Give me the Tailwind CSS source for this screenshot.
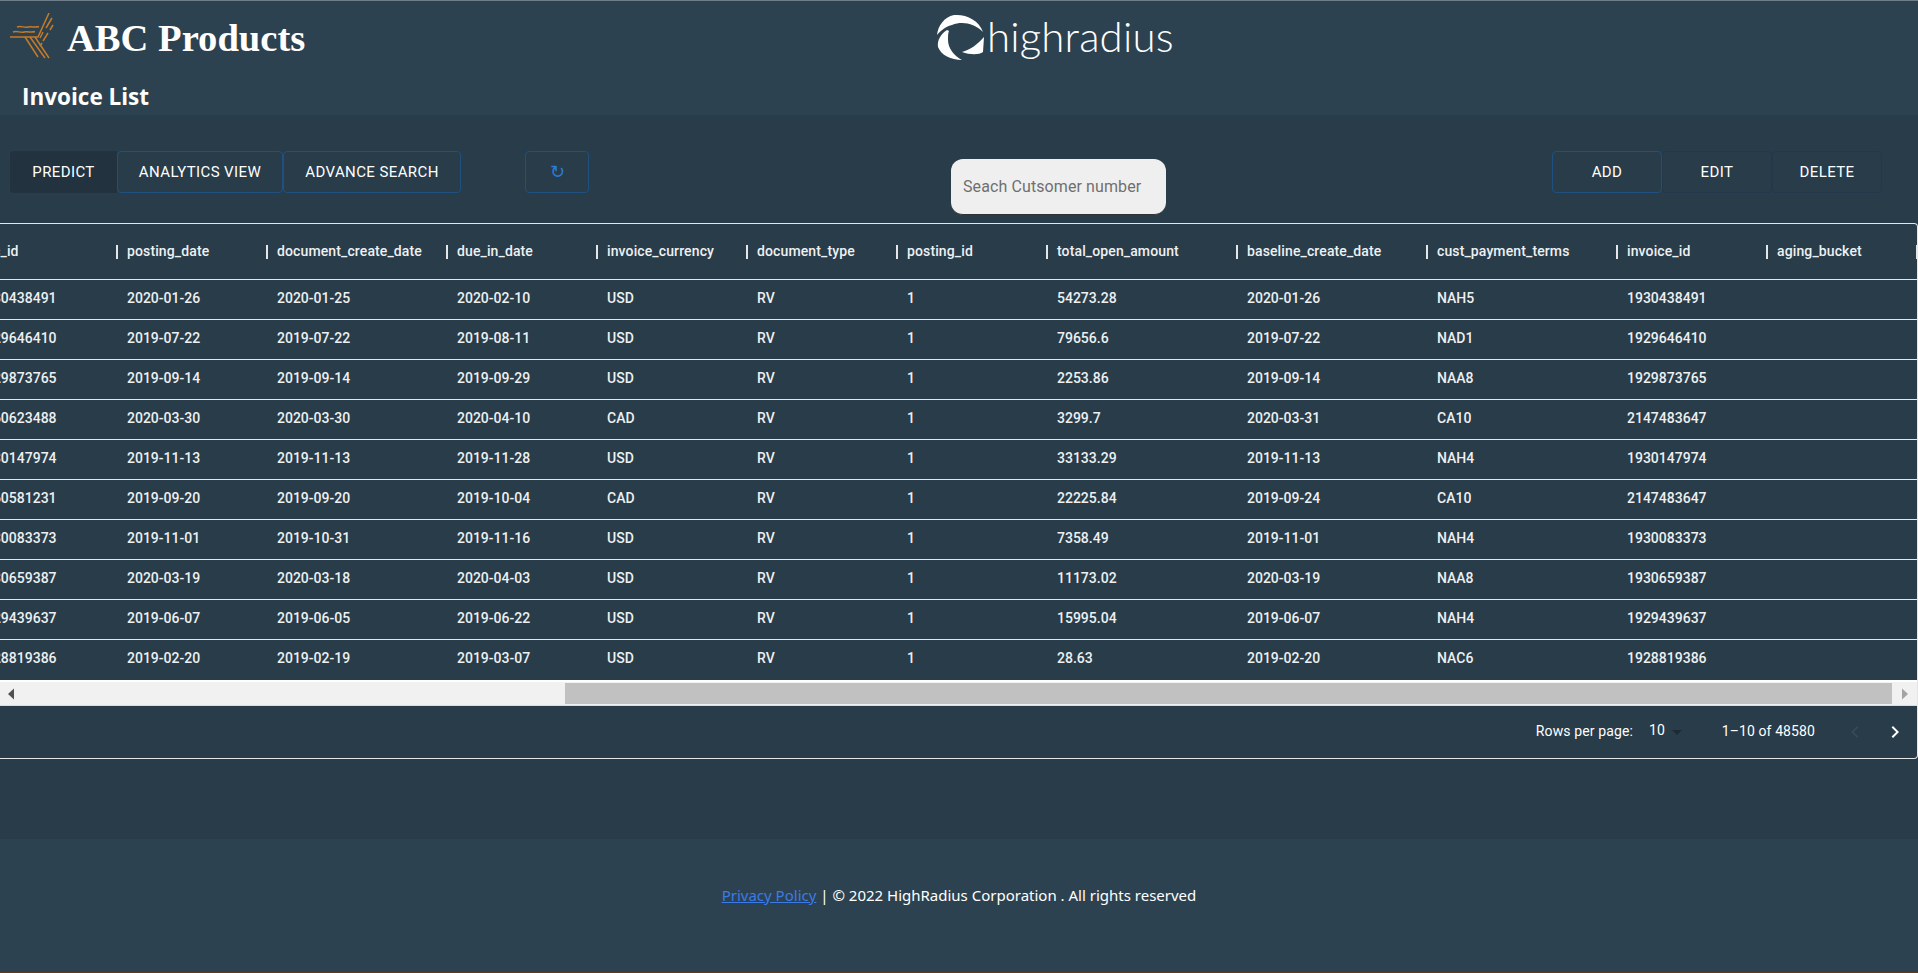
<!DOCTYPE html>
<html lang="en">
<head>
<meta charset="utf-8">
<title>ABC Products - Invoice List</title>
<script src="https://cdn.jsdelivr.net/npm/@tailwindcss/browser@4"></script>
</head>
<body class="m-0 w-[1918px] h-[973px] overflow-hidden bg-[#283c4a] font-['Roboto',sans-serif] text-white">
<header class="h-[115px] bg-[#2d4250] border-t border-t-[#6f7f8a] flex flex-col">
  <div class="h-[75px] flex items-start">
    <div class="w-[934px] shrink-0 flex items-start pl-[10px] pt-[12px]">
      <svg class="w-[45px] h-[47px]" viewBox="10 13 45 47" fill="none" stroke="#c77a26" stroke-width="1.5">
        <path d="M10 37H38L49 13"/><path d="M17 27c4-1.500 7 1 11 0s7 1 11-.5"/><path d="M13 32c4-1.500 7 1 11 0s7 1 11-.5"/>
        <path d="M25 37l13 20M30 37l15 21M35 37l14 21"/><path d="M52 18l-6 10M43 32l-3 6M53 25l-3 5M48 33l-5 8M42 43l-2 3"/>
      </svg>
      <span class="ml-[12px] font-['Liberation_Serif',serif] font-bold text-[38.600px] leading-[50px]">ABC Products</span>
    </div>
    <div class="flex items-start pt-[9px]">
      <svg class="w-[56px] h-[56px] shrink-0" viewBox="0 0 56 56" fill="#fff">
        <path d="M49 22C45 10 32 4 20 5 10 7 4 16 3 25c4-5 10-9 15-10 10-4 22-2 31 7Z"/>
        <path d="M13 20C7 24 3 30 4 37c3 8 13 13 24 13-8-4-14-12-14-20 0-4 0-7 1-9Z"/>
        <path d="M50 27l-1 15c-4 3-13 3-21 0 8-2 16-8 22-15Z"/>
      </svg>
      <span class="mt-[1px] ml-[-3px] font-['Lato',sans-serif] font-light text-[42px] leading-[50px] tracking-[0.15px]">highradius</span>
    </div>
  </div>
  <h1 class="pl-[22px] font-['Open_Sans',sans-serif] font-bold text-[22.500px] leading-[32px] mt-[5px]">Invoice List</h1>
</header>

<section class="h-[108px] flex items-start pt-[36px] pl-[10px]">
  <div class="flex shrink-0">
    <button class="h-[42px] w-[107px] rounded-l-[4px] bg-[#22323e] text-[15px] tracking-[0.4px]">PREDICT</button>
    <button class="h-[42px] w-[166px] rounded-[4px] border border-[#1f5080] text-[15px] tracking-[0.4px]">ANALYTICS VIEW</button>
    <button class="h-[42px] w-[178px] rounded-[4px] border border-[#1f5080] text-[15px] tracking-[0.4px]">ADVANCE SEARCH</button>
  </div>
  <button class="ml-[64px] shrink-0 h-[42px] w-[64px] rounded-[4px] border border-[#1f5080] text-[18px] pb-[2px] text-[#2b7ad6]">↻</button>
  <div class="ml-[362px] mt-[8px] shrink-0 w-[215px] h-[56px] rounded-[12px] bg-[#efefef] border-b border-b-[#333] flex items-center px-[12px] pt-[1px] text-[16px] tracking-[0.1px] text-[#6f6f6f]">Seach Cutsomer number</div>
  <div class="ml-[386px] flex shrink-0">
    <button class="h-[42px] w-[110px] rounded-[4px] border border-[#1f5080] text-[15px] tracking-[0.4px]">ADD</button>
    <button class="h-[42px] w-[110px] rounded-[4px] border border-[#23384a] text-[15px] tracking-[0.4px]">EDIT</button>
    <button class="h-[42px] w-[110px] rounded-[4px] border border-[#23384a] text-[15px] tracking-[0.4px]">DELETE</button>
  </div>
</section>

<main class="h-[536px] border-y border-r border-[#e4e6e8] rounded-r-[4px] overflow-hidden">
  <div class="ml-[-44px] text-[14px] font-medium text-[#eef0f1]">
    <div class="flex h-[56px] items-center border-b border-[#e4e6e8] tracking-[0.12px]">
      <div class="w-[160px] pl-[21px] shrink-0">doc_id</div>
      <div class="w-[150px] shrink-0 flex items-center"><span class="w-[2px] h-[14px] bg-[#e4e6e8] mr-[9px]"></span>posting_date</div>
      <div class="w-[180px] shrink-0 flex items-center"><span class="w-[2px] h-[14px] bg-[#e4e6e8] mr-[9px]"></span>document_create_date</div>
      <div class="w-[150px] shrink-0 flex items-center"><span class="w-[2px] h-[14px] bg-[#e4e6e8] mr-[9px]"></span>due_in_date</div>
      <div class="w-[150px] shrink-0 flex items-center"><span class="w-[2px] h-[14px] bg-[#e4e6e8] mr-[9px]"></span>invoice_currency</div>
      <div class="w-[150px] shrink-0 flex items-center"><span class="w-[2px] h-[14px] bg-[#e4e6e8] mr-[9px]"></span>document_type</div>
      <div class="w-[150px] shrink-0 flex items-center"><span class="w-[2px] h-[14px] bg-[#e4e6e8] mr-[9px]"></span>posting_id</div>
      <div class="w-[190px] shrink-0 flex items-center"><span class="w-[2px] h-[14px] bg-[#e4e6e8] mr-[9px]"></span>total_open_amount</div>
      <div class="w-[190px] shrink-0 flex items-center"><span class="w-[2px] h-[14px] bg-[#e4e6e8] mr-[9px]"></span>baseline_create_date</div>
      <div class="w-[190px] shrink-0 flex items-center"><span class="w-[2px] h-[14px] bg-[#e4e6e8] mr-[9px]"></span>cust_payment_terms</div>
      <div class="w-[150px] shrink-0 flex items-center"><span class="w-[2px] h-[14px] bg-[#e4e6e8] mr-[9px]"></span>invoice_id</div>
      <div class="w-[150px] shrink-0 flex items-center"><span class="w-[2px] h-[14px] bg-[#e4e6e8] mr-[9px]"></span>aging_bucket</div>
      <div class="w-[2px] h-[14px] bg-[#e4e6e8] shrink-0"></div>
    </div>
    <div class="flex h-[40px] items-center border-b border-[#e4e6e8] pb-[2px]"><div class="w-[171px] pl-[21px] shrink-0">1930438491</div><div class="w-[150px] shrink-0">2020-01-26</div><div class="w-[180px] shrink-0">2020-01-25</div><div class="w-[150px] shrink-0">2020-02-10</div><div class="w-[150px] shrink-0">USD</div><div class="w-[150px] shrink-0">RV</div><div class="w-[150px] shrink-0">1</div><div class="w-[190px] shrink-0">54273.28</div><div class="w-[190px] shrink-0">2020-01-26</div><div class="w-[190px] shrink-0">NAH5</div><div class="w-[150px] shrink-0">1930438491</div></div>
    <div class="flex h-[40px] items-center border-b border-[#e4e6e8] pb-[2px]"><div class="w-[171px] pl-[21px] shrink-0">1929646410</div><div class="w-[150px] shrink-0">2019-07-22</div><div class="w-[180px] shrink-0">2019-07-22</div><div class="w-[150px] shrink-0">2019-08-11</div><div class="w-[150px] shrink-0">USD</div><div class="w-[150px] shrink-0">RV</div><div class="w-[150px] shrink-0">1</div><div class="w-[190px] shrink-0">79656.6</div><div class="w-[190px] shrink-0">2019-07-22</div><div class="w-[190px] shrink-0">NAD1</div><div class="w-[150px] shrink-0">1929646410</div></div>
    <div class="flex h-[40px] items-center border-b border-[#e4e6e8] pb-[2px]"><div class="w-[171px] pl-[21px] shrink-0">1929873765</div><div class="w-[150px] shrink-0">2019-09-14</div><div class="w-[180px] shrink-0">2019-09-14</div><div class="w-[150px] shrink-0">2019-09-29</div><div class="w-[150px] shrink-0">USD</div><div class="w-[150px] shrink-0">RV</div><div class="w-[150px] shrink-0">1</div><div class="w-[190px] shrink-0">2253.86</div><div class="w-[190px] shrink-0">2019-09-14</div><div class="w-[190px] shrink-0">NAA8</div><div class="w-[150px] shrink-0">1929873765</div></div>
    <div class="flex h-[40px] items-center border-b border-[#e4e6e8] pb-[2px]"><div class="w-[171px] pl-[21px] shrink-0">2960623488</div><div class="w-[150px] shrink-0">2020-03-30</div><div class="w-[180px] shrink-0">2020-03-30</div><div class="w-[150px] shrink-0">2020-04-10</div><div class="w-[150px] shrink-0">CAD</div><div class="w-[150px] shrink-0">RV</div><div class="w-[150px] shrink-0">1</div><div class="w-[190px] shrink-0">3299.7</div><div class="w-[190px] shrink-0">2020-03-31</div><div class="w-[190px] shrink-0">CA10</div><div class="w-[150px] shrink-0">2147483647</div></div>
    <div class="flex h-[40px] items-center border-b border-[#e4e6e8] pb-[2px]"><div class="w-[171px] pl-[21px] shrink-0">1930147974</div><div class="w-[150px] shrink-0">2019-11-13</div><div class="w-[180px] shrink-0">2019-11-13</div><div class="w-[150px] shrink-0">2019-11-28</div><div class="w-[150px] shrink-0">USD</div><div class="w-[150px] shrink-0">RV</div><div class="w-[150px] shrink-0">1</div><div class="w-[190px] shrink-0">33133.29</div><div class="w-[190px] shrink-0">2019-11-13</div><div class="w-[190px] shrink-0">NAH4</div><div class="w-[150px] shrink-0">1930147974</div></div>
    <div class="flex h-[40px] items-center border-b border-[#e4e6e8] pb-[2px]"><div class="w-[171px] pl-[21px] shrink-0">2960581231</div><div class="w-[150px] shrink-0">2019-09-20</div><div class="w-[180px] shrink-0">2019-09-20</div><div class="w-[150px] shrink-0">2019-10-04</div><div class="w-[150px] shrink-0">CAD</div><div class="w-[150px] shrink-0">RV</div><div class="w-[150px] shrink-0">1</div><div class="w-[190px] shrink-0">22225.84</div><div class="w-[190px] shrink-0">2019-09-24</div><div class="w-[190px] shrink-0">CA10</div><div class="w-[150px] shrink-0">2147483647</div></div>
    <div class="flex h-[40px] items-center border-b border-[#e4e6e8] pb-[2px]"><div class="w-[171px] pl-[21px] shrink-0">1930083373</div><div class="w-[150px] shrink-0">2019-11-01</div><div class="w-[180px] shrink-0">2019-10-31</div><div class="w-[150px] shrink-0">2019-11-16</div><div class="w-[150px] shrink-0">USD</div><div class="w-[150px] shrink-0">RV</div><div class="w-[150px] shrink-0">1</div><div class="w-[190px] shrink-0">7358.49</div><div class="w-[190px] shrink-0">2019-11-01</div><div class="w-[190px] shrink-0">NAH4</div><div class="w-[150px] shrink-0">1930083373</div></div>
    <div class="flex h-[40px] items-center border-b border-[#e4e6e8] pb-[2px]"><div class="w-[171px] pl-[21px] shrink-0">1930659387</div><div class="w-[150px] shrink-0">2020-03-19</div><div class="w-[180px] shrink-0">2020-03-18</div><div class="w-[150px] shrink-0">2020-04-03</div><div class="w-[150px] shrink-0">USD</div><div class="w-[150px] shrink-0">RV</div><div class="w-[150px] shrink-0">1</div><div class="w-[190px] shrink-0">11173.02</div><div class="w-[190px] shrink-0">2020-03-19</div><div class="w-[190px] shrink-0">NAA8</div><div class="w-[150px] shrink-0">1930659387</div></div>
    <div class="flex h-[40px] items-center border-b border-[#e4e6e8] pb-[2px]"><div class="w-[171px] pl-[21px] shrink-0">1929439637</div><div class="w-[150px] shrink-0">2019-06-07</div><div class="w-[180px] shrink-0">2019-06-05</div><div class="w-[150px] shrink-0">2019-06-22</div><div class="w-[150px] shrink-0">USD</div><div class="w-[150px] shrink-0">RV</div><div class="w-[150px] shrink-0">1</div><div class="w-[190px] shrink-0">15995.04</div><div class="w-[190px] shrink-0">2019-06-07</div><div class="w-[190px] shrink-0">NAH4</div><div class="w-[150px] shrink-0">1929439637</div></div>
    <div class="flex h-[40px] items-center pb-[3px]"><div class="w-[171px] pl-[21px] shrink-0">1928819386</div><div class="w-[150px] shrink-0">2019-02-20</div><div class="w-[180px] shrink-0">2019-02-19</div><div class="w-[150px] shrink-0">2019-03-07</div><div class="w-[150px] shrink-0">USD</div><div class="w-[150px] shrink-0">RV</div><div class="w-[150px] shrink-0">1</div><div class="w-[190px] shrink-0">28.63</div><div class="w-[190px] shrink-0">2019-02-20</div><div class="w-[190px] shrink-0">NAC6</div><div class="w-[150px] shrink-0">1928819386</div></div>
  </div>
  <div class="h-[26px] bg-[#f1f1f1] border-t-2 border-t-white border-b border-b-[#dcdcdc] flex items-center">
    <svg class="w-[17px] h-[12px] ml-[4px] shrink-0" viewBox="0 0 17 12" fill="#505050"><path d="M4 6l6-5.500v11z"/></svg>
    <div class="ml-[544px] w-[1327px] h-[21px] bg-[#c1c1c1] shrink-0"></div>
    <svg class="w-[17px] h-[12px] ml-[3px] shrink-0" viewBox="0 0 17 12" fill="#a3a3a3"><path d="M13 6L7 .5v11z"/></svg>
  </div>
  <div class="h-[52px] flex items-center justify-end text-[14px]">
    <span class="tracking-[0.12px] pb-[2px]">Rows per page:</span>
    <span class="ml-[16px] pb-[4px]">10</span>
    <svg class="w-[24px] h-[24px] shrink-0" viewBox="0 0 24 24" fill="#1c2a34"><path d="M7 10l5 5 5-5z"/></svg>
    <span class="ml-[33px] tracking-[0.1px] pb-[2px]">1–10 of 48580</span>
    <svg class="w-[24px] h-[24px] ml-[28px]" viewBox="0 0 24 24" fill="#344a59"><path d="M15.400 7.400L14 6l-6 6 6 6 1.400-1.400L10.800 12z"/></svg>
    <svg class="w-[24px] h-[24px] ml-[16px] mr-[10px]" viewBox="0 0 24 24" fill="#fff"><path d="M10 6L8.600 7.400 13.200 12l-4.600 4.600L10 18l6-6z"/></svg>
  </div>
</main>

<div class="h-[80px]"></div>
<footer class="h-[134px] bg-[#2d4250] border-b border-b-[#5a3a20] flex justify-center pt-[46px] text-[15px] leading-[20px] font-['Noto_Sans',sans-serif]">
  <span><a class="text-[#3b7be6] underline">Privacy Policy</a> | © 2022 HighRadius Corporation . All rights reserved</span>
</footer>
</body>
</html>
